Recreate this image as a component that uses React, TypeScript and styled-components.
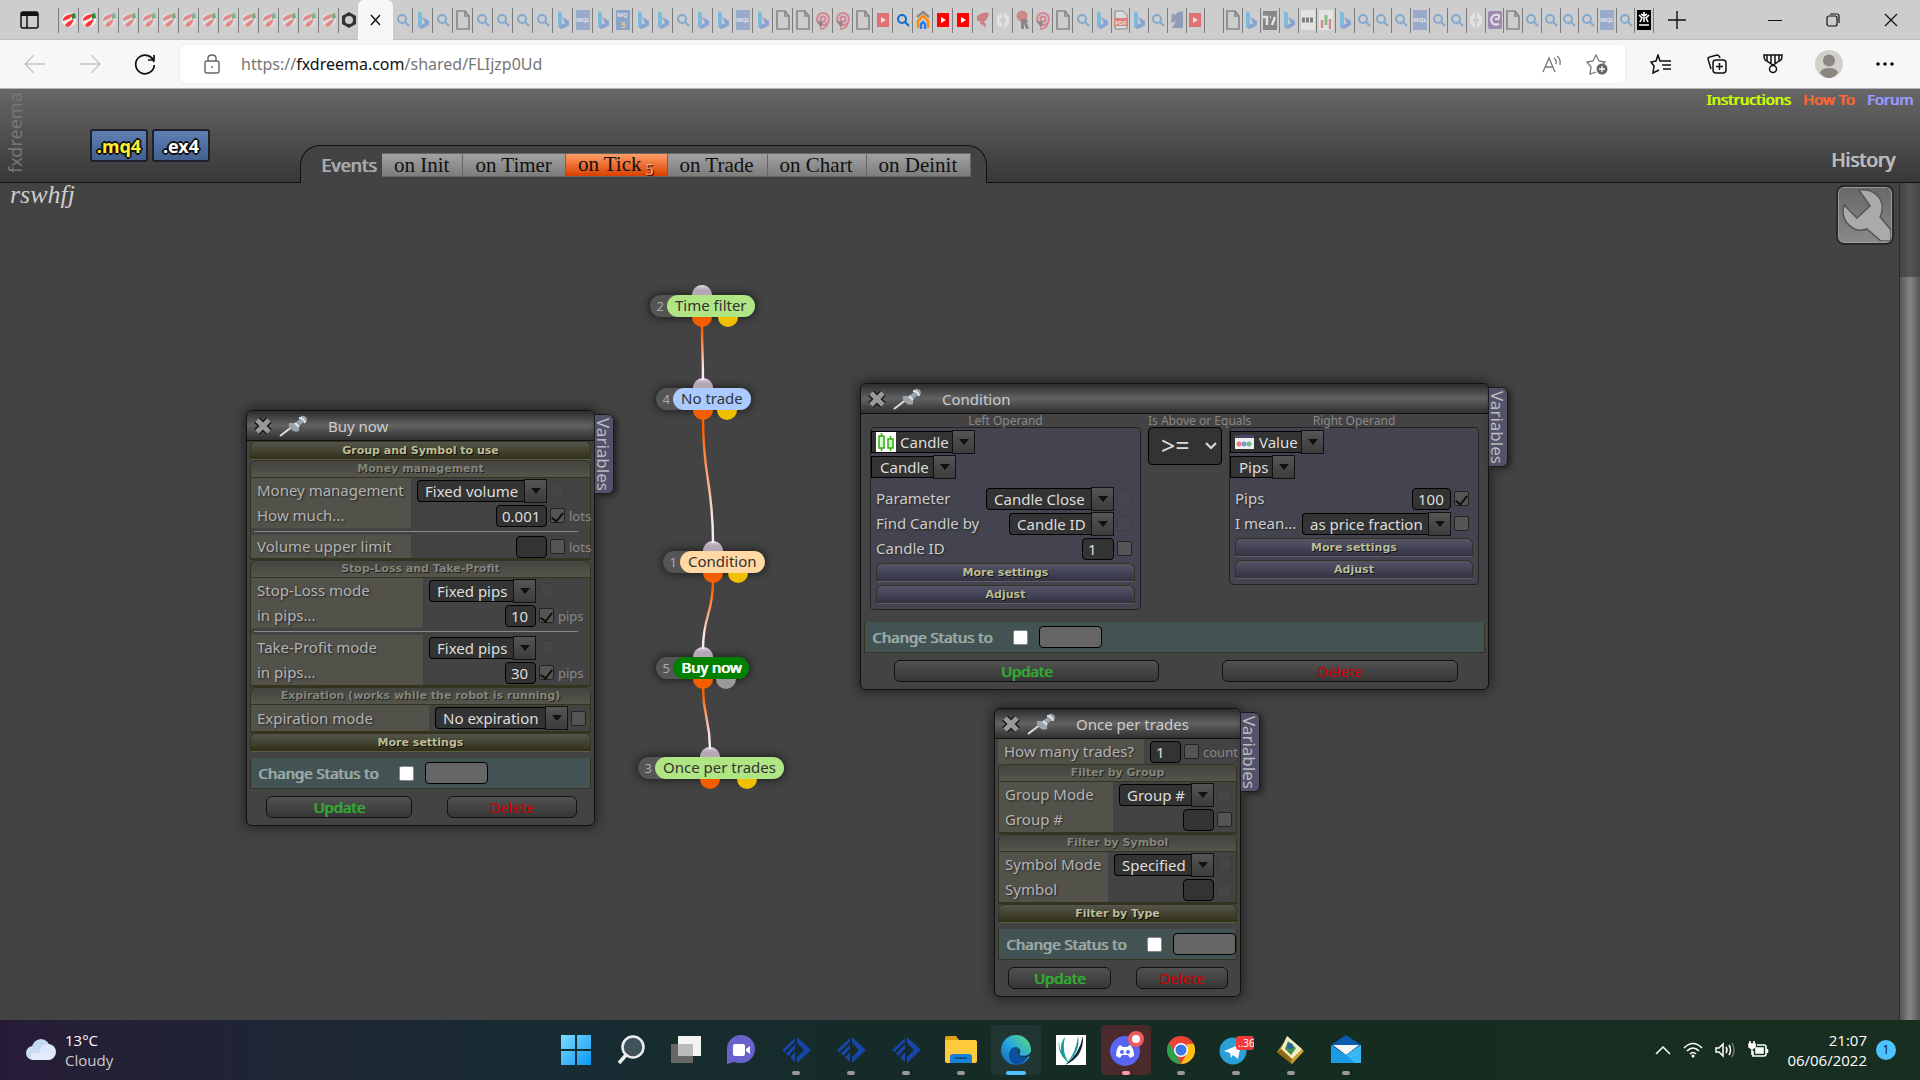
import React, { useId } from "react";
import styled, { createGlobalStyle, css } from "styled-components";

const UI = `"Noto Sans", "Open Sans", sans-serif`;
const CHROME = `"Open Sans", "Noto Sans", sans-serif`;
const HEAD = `"DejaVu Sans", Verdana, sans-serif`;
const SERIF = `"Liberation Serif", Georgia, serif`;

const Global = createGlobalStyle`
  * { box-sizing: border-box; }
  body { margin: 0; background: #434343; font-family: ${UI}; font-size: 15px; }
  button, input, select { font: inherit; color: inherit; margin: 0; }
  button { padding: 0; border: 0; background: none; cursor: pointer; }
  a { text-decoration: none; }
`;

const Page = styled.div`
  min-height: 100vh;
  display: flex;
  flex-direction: column;
  overflow: hidden;
`;

/* ---------- browser chrome ---------- */

const TabStrip = styled.div`
  display: flex;
  height: 40px;
  background: #cdcdcd;
  box-shadow: inset 0 -1px #bdbdbd;
`;
const TabMenu = styled.button`
  width: 58px;
  display: grid;
  place-items: center;
`;
const Tabs = styled.div<{ $width?: number }>`
  display: flex;
  align-items: center;
  ${(p) => p.$width && `flex: 0 0 ${p.$width}px;`}
`;
const TabItem = styled.button<{ $grow?: boolean; $side: "left" | "right"; $dim?: boolean }>`
  flex: ${(p) => (p.$grow ? "1 1 0" : "0 0 20px")};
  min-width: 0;
  height: 25px;
  display: grid;
  place-items: center;
  border-${(p) => p.$side}: 1px solid #7c7c7c;
  svg { opacity: ${(p) => (p.$dim ? 0.45 : 1)}; }
`;
const ActiveTab = styled.div`
  width: 35px;
  display: grid;
  place-items: center;
  background: #f7f7f7;
  border-radius: 6px 6px 0 0;
`;
const NewTab = styled.button`
  width: 46px;
  display: grid;
  place-items: center;
`;
const WindowButtons = styled.div`
  margin-left: auto;
  display: flex;
`;
const WindowButton = styled.button`
  width: 58px;
  display: grid;
  place-items: center;
`;
const Toolbar = styled.div`
  display: flex;
  align-items: center;
  height: 49px;
  background: #f7f7f7;
  border-bottom: 1px solid #b4b4b4;
  padding: 0 7px;
`;
const ToolButton = styled.button`
  width: 56px;
  height: 40px;
  display: grid;
  place-items: center;
`;
const NavGroup = styled.div`
  display: flex;
  width: 173px;
  button { width: 55px; }
`;
const UrlBar = styled.div`
  flex: 1;
  display: flex;
  align-items: center;
  height: 38px;
  background: #fff;
  border-radius: 5px;
  box-shadow: 0 0 2px #ddd;
  padding: 0 6px 0 23px;
  margin-right: 8px;
  gap: 20px;
`;
const UrlText = styled.div`
  flex: 1;
  font: 16px/24px ${UI};
  color: #767676;
  b { font-weight: 400; color: #111; }
`;
const UrlTools = styled.div`
  display: flex;
  button { width: 45px; }
`;

type Kind = "flag" | "hex" | "q" | "Q" | "b" | "doc" | "mql" | "mq5" | "sp" | "yt" | "YT" | "home" | "bird" | "dia" | "man" | "pdf" | "kn" | "none" | "tv" | "dots" | "bars" | "c" | "skull";

function Favicon({ kind }: { kind: Kind }) {
  const body: Record<Kind, React.ReactNode> = {
    flag: <g><circle cx="7" cy="10" r="7" fill="#eee" /><path d="M1 9Q4 4 12 4Q9 9 1 11Z" fill="#f33" /><path d="M3 15Q6 11 12 9Q10 16 5 17Z" fill="#f33" /><path d="M10 4L13 3L14 8L10 9Z" fill="#2b8a35" /></g>,
    hex: <path d="M7 2L14 6V14L7 18L0 14V6ZM7 6A4 4 0 1 0 7 14A4 4 0 1 0 7 6Z" fill="#333" fillRule="evenodd" />,
    q: <g fill="none" stroke="#2a7fd0" strokeWidth="2"><circle cx="6" cy="9" r="4" /><path d="M9 12L13 16" /></g>,
    Q: <g fill="none" stroke="#0b6ccb" strokeWidth="2"><circle cx="6" cy="9" r="4" /><path d="M9 12L13 16" /></g>,
    b: <g><path d="M2 1L6 3V15L2 17Z" fill="#1ba7ec" /><path d="M6 7L13 11V15L6 19L2 17L9 13Z" fill="#3d6fe0" /></g>,
    doc: <path d="M1 1H9L13 6V19H1ZM9 1V6H13" fill="none" stroke="#333" strokeWidth="1.6" />,
    mql: <g><rect width="14" height="20" fill="#5b84c8" /><text x="0" y="12" fontSize="6" fontWeight="700" fill="#fff" fontFamily="Open Sans">MQL</text></g>,
    mq5: <g><rect width="14" height="20" fill="#3b73c8" /><text x="1" y="7" fontSize="6" fontWeight="700" fill="#fff" fontFamily="Open Sans">MQ</text><text x="5" y="18" fontSize="8" fontWeight="700" fill="#fc3" fontFamily="Open Sans">5</text></g>,
    sp: <g fill="none" stroke="#e0304a" strokeWidth="2"><circle cx="7" cy="9" r="6" /><circle cx="7" cy="9" r="2.600" /><path d="M12 13Q10 19 4 19" /><path d="M1 11L7 12L5 18Z" fill="#333" stroke="none" /></g>,
    yt: <g><rect x="1" y="3" width="12" height="14" fill="#f00" /><path d="M5 7L10 10L5 13Z" fill="#fff" /></g>,
    YT: <g><rect x="1" y="3" width="12" height="14" fill="#f00" /><path d="M5 7L10 10L5 13Z" fill="#fff" /></g>,
    home: <g fill="none" strokeWidth="2.4"><path d="M1 7L7 2L13 7" stroke="#888" /><path d="M2 18V11L7 6L12 11V18" stroke="#f80" /><path d="M5 19V14L7 12L9 14V19" stroke="#27f" /></g>,
    bird: <path d="M1 6Q7 1 13 3Q12 9 8 12Q11 14 9 18Q7 14 4 14Q6 10 1 11Z" fill="#d02030" />,
    dia: <path d="M6 2L1 7V14L6 18V13L3 10L6 8ZM8 2L13 7V14L8 18V13L11 10L8 8Z" fill="#fff" />,
    man: <g><circle cx="6" cy="6" r="5.500" fill="#c33" /><path d="M5 9H10Q13 10 11 13L13 19H10L8 14V19H5Z" fill="#333" /></g>,
    pdf: <g><path d="M1 1H9L13 5V19H1Z" fill="#eee" stroke="#333" /><rect y="8" width="14" height="8" fill="#e22" /><text x="1" y="15" fontSize="6" fontWeight="700" fill="#fff" fontFamily="Open Sans">PDF</text></g>,
    kn: <path d="M2 3L5 5L8 2L13 1V18H2L6 11L1 13Z" fill="#46649c" />,
    none: null,
    tv: <g><rect y="1" width="14" height="19" fill="#333" /><path d="M0 7H4V15M9 15L12 7M7 7H8" stroke="#fff" strokeWidth="2.400" fill="none" /></g>,
    dots: <g><rect width="14" height="20" fill="#fff" /><path d="M1 10H13" stroke="#222" strokeWidth="5" strokeDasharray="3 1" /></g>,
    bars: <g><rect width="14" height="20" fill="#fff" /><path d="M3 10V18M11 9V19" stroke="#d33" strokeWidth="2.4" /><path d="M7 5V15" stroke="#3a3" strokeWidth="3" /></g>,
    c: <g><rect y="1" width="14" height="18" rx="2" fill="#6b3a90" /><path d="M11 5Q4 4 3 10Q4 16 11 14M11 5Q12 10 7 9" fill="none" stroke="#fff" strokeWidth="2" /></g>,
    skull: <g><rect width="14" height="20" fill="#000" /><path d="M7 2V12M2 5L5 8L3 12M12 5L9 8L11 12M2 15H12M4 4L7 6L10 4" stroke="#fff" strokeWidth="1.6" fill="none" /></g>,
  };
  return <svg width="14" height="20" viewBox="0 0 14 20">{body[kind]}</svg>;
}

const BRIGHT: Kind[] = ["Q", "YT", "home", "skull", "hex"];
const middleTabs = "q b q doc q q q q b mql b mq5 b b q b b mql b doc doc sp sp doc yt Q home YT YT bird dia man sp doc q".split(" ") as Kind[];
const narrowTabs = "b pdf b q kn yt none doc b tv b dots bars b q q q mql q q dia c doc q q q q mql q skull".split(" ") as Kind[];

function BrowserChrome() {
  return (
    <header>
      <TabStrip>
        <TabMenu aria-label="Tab actions">
          <svg width="19" height="18" fill="none" stroke="#111" strokeWidth="1.5"><rect x="1" y="1" width="17" height="16" rx="2" /><path d="M7 4V17" /><path d="M1 3H18" strokeWidth="4" /></svg>
        </TabMenu>
        <Tabs>
          {Array.from({ length: 14 }, (_, i) => (
            <TabItem key={i} $side="left" $dim={i > 1} aria-label={`Tab ${i + 1}`}><Favicon kind="flag" /></TabItem>
          ))}
          <TabItem $side="left" aria-label="Tab 15"><Favicon kind="hex" /></TabItem>
        </Tabs>
        <ActiveTab>
          <button aria-label="Close tab"><svg width="11" height="12" stroke="#111" strokeWidth="1.4"><path d="M1 1L10 11M10 1L1 11" /></svg></button>
        </ActiveTab>
        <Tabs>
          {middleTabs.map((k, i) => (
            <TabItem key={i} $side="right" $dim={!BRIGHT.includes(k)} aria-label={`Tab ${i + 17}`}><Favicon kind={k} /></TabItem>
          ))}
        </Tabs>
        <Tabs $width={561}>
          {narrowTabs.map((k, i) => (
            <TabItem key={i} $grow $side="right" $dim={!BRIGHT.includes(k)} aria-label={`Tab ${i + 52}`}><Favicon kind={k} /></TabItem>
          ))}
        </Tabs>
        <NewTab aria-label="New tab"><svg width="18" height="18" stroke="#111" strokeWidth="1.4"><path d="M9 0V18M0 9H18" /></svg></NewTab>
        <WindowButtons>
          <WindowButton aria-label="Minimize"><svg width="14" height="14" stroke="#111"><path d="M0 7.500H14" /></svg></WindowButton>
          <WindowButton aria-label="Restore"><svg width="14" height="14" fill="none" stroke="#111" strokeWidth="1.2"><rect x="1" y="3" width="10" height="10" rx="2" /><path d="M4 1H11Q13 1 13 3V10" /></svg></WindowButton>
          <WindowButton aria-label="Close"><svg width="14" height="14" stroke="#111" strokeWidth="1.2"><path d="M1 1L13 13M13 1L1 13" /></svg></WindowButton>
        </WindowButtons>
      </TabStrip>
      <Toolbar>
        <NavGroup>
          <ToolButton aria-label="Back"><svg width="22" height="20" fill="none" stroke="#c4c4c4" strokeWidth="1.4"><path d="M21 10H2M10 1L1 10L10 19" /></svg></ToolButton>
          <ToolButton aria-label="Forward"><svg width="22" height="20" fill="none" stroke="#c4c4c4" strokeWidth="1.4"><path d="M1 10H20M12 1L21 10L12 19" /></svg></ToolButton>
          <ToolButton aria-label="Refresh"><svg width="22" height="22" fill="none" stroke="#111" strokeWidth="1.7"><path d="M20 9A9.300 9.300 0 1 0 20.300 12M20 2V7H14" /></svg></ToolButton>
        </NavGroup>
        <UrlBar>
          <svg width="18" height="20" fill="none" stroke="#666" strokeWidth="1.4"><rect x="2" y="7" width="14" height="12" rx="2" /><path d="M5 7V4.500Q5 1 9 1Q13 1 13 4.500V7" /><circle cx="9" cy="13" r="1" fill="#666" stroke="none" /></svg>
          <UrlText>https://<b>fxdreema.com</b>/shared/FLIjzp0Ud</UrlText>
          <UrlTools>
            <ToolButton aria-label="Read aloud"><svg width="20" height="18" fill="none" stroke="#777" strokeWidth="1.3"><path d="M1 17L7 3L13 17M3 12H11M12 3Q15 5 14 9M15 1Q19 4 18 10" /></svg></ToolButton>
            <ToolButton aria-label="Add to favorites"><svg width="22" height="21" fill="none" stroke="#777" strokeWidth="1.3"><path d="M10 18L4 20L5 13L1 8L7 7L10 1L13 7L19 8L17 10" /><circle cx="16" cy="15" r="5.500" fill="#666" stroke="none" /><path d="M16 12V18M13 15H19" stroke="#fff" /></svg></ToolButton>
          </UrlTools>
        </UrlBar>
        <ToolButton aria-label="Favorites"><svg width="22" height="20" fill="none" stroke="#111" strokeWidth="1.5"><path d="M14 7L10 7L8 1L6 7L1 8L4 12L3 19L9 16M14 7H21M12 11H21M13 15H21" /></svg></ToolButton>
        <ToolButton aria-label="Collections"><svg width="22" height="20" fill="none" stroke="#111" strokeWidth="1.5"><path d="M5 15L2 5Q2 3 4 3L11 1Q13 1 14 4" /><rect x="7" y="6" width="13" height="13" rx="3" /><path d="M13.500 9V16M10 12.500H17" /></svg></ToolButton>
        <ToolButton aria-label="Rewards"><svg width="20" height="20" fill="none" stroke="#111" strokeWidth="1.5"><path d="M4 1H16V7L10 11L4 7ZM4 1H1Q1 7 4 7M16 1H19Q19 7 16 7M8 1V9M12 1V9" /><circle cx="10" cy="15" r="3.500" /></svg></ToolButton>
        <ToolButton aria-label="Profile"><svg width="28" height="28"><circle cx="14" cy="14" r="14" fill="#d3d0cc" /><circle cx="14" cy="10.500" r="6" fill="#8c8680" /><path d="M5 23Q6 18 14 18Q22 18 23 23Q19 28 14 28Q9 28 5 23" fill="#8c8680" /></svg></ToolButton>
        <ToolButton aria-label="Settings and more"><svg width="18" height="4" fill="#111"><circle cx="2" cy="2" r="1.800" /><circle cx="9" cy="2" r="1.800" /><circle cx="16" cy="2" r="1.800" /></svg></ToolButton>
      </Toolbar>
    </header>
  );
}

/* ---------- site header ---------- */

const faux = css`text-shadow: 1px 0 currentColor;`;

const SiteHeader = styled.div`
  display: flex;
  height: 94px;
  background: linear-gradient(#676767, #383838);
  border-bottom: 1px solid #111;
`;
const Brand = styled.div`
  width: 26px;
  writing-mode: vertical-rl;
  transform: rotate(180deg);
  padding-bottom: 3px;
  font-size: 18px;
  line-height: 30px;
  text-align: right;
  color: #777;
`;
const Downloads = styled.div`
  display: flex;
  gap: 4px;
  padding: 40px 0 0 64px;
  width: 274px;
`;
const FileButton = styled.button<{ $color: string }>`
  width: 58px;
  height: 33px;
  border: 2px solid #1c222c;
  border-radius: 3px;
  background: linear-gradient(#5f7fb4, #42608f);
  color: ${(p) => p.$color};
  font: 700 18px/24px ${UI};
  text-shadow: -2px 0 #111, 2px 0 #111, 0 -2px #111, 0 2px #111, -1px -1px #111, 1px 1px #111, 1px -1px #111, -1px 1px #111;
`;
const EventPanel = styled.div`
  display: flex;
  align-items: center;
  align-self: flex-end;
  height: 38px;
  margin-bottom: -1px;
  padding: 0 15px 0 20px;
  background: #434343;
  border: 1px solid #111;
  border-bottom: 0;
  border-radius: 20px 20px 0 0;
`;
const EventTitle = styled.div`
  width: 61px;
  font-size: 18px;
  line-height: 22px;
  color: #aaa;
  ${faux}
`;
const EventTab = styled.button<{ $active?: boolean }>`
  height: 24px;
  padding: 0 13px 0 12px;
  border: 1px solid #666;
  border-left-width: 0;
  background: ${(p) => (p.$active ? "linear-gradient(#ff9d66, #d84000)" : "linear-gradient(#a2a2a2, #7c7c7c)")};
  color: #111;
  font: 21px/20px ${SERIF};
  white-space: nowrap;
  sub { font-size: 16px; line-height: 10px; color: #ffb184; text-shadow: 1px 1px 1px #000; margin-left: 4px; vertical-align: -4px; }
`;
const HeaderSide = styled.div`
  margin-left: auto;
  display: flex;
  flex-direction: column;
  justify-content: space-between;
  align-items: flex-end;
  padding: 0 7px 8px 0;
`;
const Links = styled.nav`
  display: flex;
  gap: 12px;
  line-height: 20px;
`;
const NavLink = styled.a<{ $color: string }>`
  color: ${(p) => p.$color};
  ${faux}
`;
const History = styled.button`
  font-size: 19px;
  line-height: 28px;
  color: #bbb;
  margin-right: 18px;
  ${faux}
`;

function AppHeader() {
  return (
    <SiteHeader>
      <Brand>fxdreema</Brand>
      <Downloads>
        <FileButton $color="#fe3">.mq4</FileButton>
        <FileButton $color="#fff">.ex4</FileButton>
      </Downloads>
      <EventPanel>
        <EventTitle>Events</EventTitle>
        <EventTab>on Init</EventTab>
        <EventTab>on Timer</EventTab>
        <EventTab $active>on Tick<sub>5</sub></EventTab>
        <EventTab>on Trade</EventTab>
        <EventTab>on Chart</EventTab>
        <EventTab>on Deinit</EventTab>
      </EventPanel>
      <HeaderSide>
        <Links>
          <NavLink href="#instructions" $color="#cf0">Instructions</NavLink>
          <NavLink href="#howto" $color="#f63">How To</NavLink>
          <NavLink href="#forum" $color="#99f">Forum</NavLink>
        </Links>
        <History>History</History>
      </HeaderSide>
    </SiteHeader>
  );
}

/* ---------- canvas ---------- */

const Canvas = styled.main`
  position: relative;
  flex: 1;
  display: flex;
  justify-content: space-between;
  background: #434343;
`;
const ProjectName = styled.div`
  padding-left: 10px;
  font: italic 26px/24px ${SERIF};
  color: #ccc;
`;
const CanvasSide = styled.div`
  display: flex;
  gap: 5px;
`;
const WrenchButton = styled.button`
  width: 58px;
  height: 60px;
  margin-top: 2px;
  border: 2px solid #2a2a2a;
  border-radius: 8px;
  background: linear-gradient(#686868, #8a8a8a);
  box-shadow: inset 0 0 0 1px #999;
`;
const ScrollTrack = styled.div`
  width: 21px;
  border-left: 1px solid #2c2c2c;
  background: linear-gradient(90deg, #444, #555, #444);
  padding-top: 94px;
`;
const ScrollThumb = styled.div`
  height: 100%;
  background: linear-gradient(90deg, #555, #858585, #555);
`;
const Wires = styled.svg`
  position: absolute;
  left: 0;
  top: 0;
  pointer-events: none;
`;

const Node = styled.button<{ $x: number; $y: number }>`
  position: absolute;
  left: ${(p) => p.$x}px;
  top: ${(p) => p.$y}px;
  display: flex;
  height: 22px;
  border-radius: 11px;
  background: #555;
  box-shadow: 0 0 8px 1px #1c1c1c;
`;
const NodeId = styled.span`
  width: 17px;
  text-align: right;
  padding-right: 3px;
  font-size: 13px;
  line-height: 22px;
  color: #aaa;
`;
const NodeLabel = styled.span<{ $bg: string; $fg: string; $bold?: boolean }>`
  height: 22px;
  padding: 0 8px;
  border-radius: 11px;
  background: ${(p) => p.$bg};
  color: ${(p) => p.$fg};
  line-height: 20px;
  font-size: 15px;
  white-space: nowrap;
  ${(p) => p.$bold && faux}
`;

type Block = { id: number; x: number; y: number; label: string; bg: string; dot: number; alt: number; fg?: string; bold?: boolean; altColor?: string };
const blocks: Block[] = [
  { id: 2, x: 650, y: 112, label: "Time filter", bg: "#b0e583", dot: 702, alt: 728 },
  { id: 4, x: 656, y: 205, label: "No trade", bg: "#abcaff", dot: 703, alt: 727 },
  { id: 1, x: 663, y: 368, label: "Condition", bg: "#ffd8a4", dot: 713, alt: 738 },
  { id: 5, x: 656, y: 474, label: "Buy now", bg: "#008000", dot: 703, alt: 726, fg: "#fff", bold: true, altColor: "#999" },
  { id: 3, x: 638, y: 574, label: "Once per trades", bg: "#b0e583", dot: 710, alt: 747 },
];

function Dots() {
  return (
    <Wires width="820" height="640">
      <defs>
        <linearGradient id="inlet" x1="0" y1="0" x2="0" y2="1"><stop offset="0" stopColor="#f6e6f6" /><stop offset=".5" stopColor="#a496a4" /></linearGradient>
      </defs>
      {blocks.map((b) => (
        <g key={b.id}>
          <path d={`M${b.dot - 10} ${b.y}a10 10 0 0 1 20 0z`} fill="#cdbfcd" />
          <path d={`M${b.dot - 10} ${b.y}a10 10 0 0 1 20 0z`} fill="url(#inlet)" fillOpacity=".6" />
          <path d={`M${b.dot - 10} ${b.y + 22}a10 10 0 0 0 20 0z`} fill="#f55e00" />
          <path d={`M${b.alt - 10} ${b.y + 22}a10 10 0 0 0 20 0z`} fill={b.altColor ?? "#f0c000"} />
        </g>
      ))}
      <defs>
        {blocks.slice(1).map((b, i) => (
          <linearGradient key={i} id={`wire${i}`} gradientUnits="userSpaceOnUse" x1="0" x2="0" y1={blocks[i].y + 32} y2={b.y - 10}>
            <stop offset="0.1" stopColor="#ff6200" /><stop offset="0.85" stopColor="#fbe8f8" />
          </linearGradient>
        ))}
      </defs>
      {blocks.slice(1).map((b, i) => {
        const a = blocks[i], y1 = a.y + 30, y2 = b.y - 8, m = (y1 + y2) / 2;
        return <path key={i} d={`M${a.dot} ${y1}C${a.dot} ${m} ${b.dot} ${m} ${b.dot} ${y2}`} fill="none" stroke={`url(#wire${i})`} strokeWidth="2.4" />;
      })}
    </Wires>
  );
}

function Diagram() {
  return (
    <>
      {blocks.map((b) => (
        <Node key={b.id} $x={b.x} $y={b.y}>
          <NodeId>{b.id}</NodeId>
          <NodeLabel $bg={b.bg} $fg={b.fg ?? "#333"} $bold={b.bold}>{b.label}</NodeLabel>
        </Node>
      ))}
      <Dots />
    </>
  );
}

/* ---------- block windows ---------- */

const Win = styled.section<{ $x: number; $y: number; $w: number }>`
  position: absolute;
  left: ${(p) => p.$x}px;
  top: ${(p) => p.$y}px;
  width: ${(p) => p.$w}px;
  border: 1px solid #111;
  border-radius: 6px;
  background: #434343;
  box-shadow: 0 0 12px 2px #222;
  padding: 0 3px 7px;
`;
const TitleBar = styled.div`
  display: flex;
  align-items: center;
  height: 30px;
  margin: 0 -3px;
  padding-left: 6px;
  border-bottom: 1px solid #111;
  border-radius: 6px 6px 0 0;
  background: linear-gradient(#2c2c2c, #626262 50%, #303030);
  color: #ccc;
`;
const TitleIcons = styled.div`
  display: flex;
  align-items: center;
  gap: 6px;
  width: 75px;
  svg { display: block; }
`;
const VariablesTab = styled.button`
  position: absolute;
  left: 100%;
  top: 3px;
  width: 20px;
  height: 80px;
  writing-mode: vertical-rl;
  font-size: 17px;
  line-height: 19px;
  color: #bbb;
  background: #52526a;
  border: 1px solid #1c1c1c;
  border-radius: 0 6px 6px 0;
  box-shadow: 3px 2px 6px #222;
`;
const Fold = styled.button<{ $tone: "olive" | "violet" }>`
  display: block;
  width: 100%;
  height: 19px;
  border: 1px solid #333320;
  border-bottom-style: dotted;
  border-radius: 6px 6px 0 0;
  font: 700 11px/16px ${HEAD};
  color: #bdbd95;
  text-shadow: 1px 1px #111;
  ${(p) => p.$tone === "olive" && "background: linear-gradient(#55554b, #303018); border-bottom-color: #66664a;"}
  ${(p) => p.$tone === "violet" && "background: linear-gradient(#555568, #333344); border-bottom-color: #666;"}
`;
const GroupHead = styled.h3`
  height: 18px;
  margin: 0;
  border: 1px solid #333320;
  border-radius: 6px 6px 0 0;
  background: linear-gradient(#444440, #55554c);
  color: #85857a;
  font: 700 11px/16px ${HEAD};
  text-align: center;
  text-shadow: 1px 1px #222;
`;
const GroupBody = styled.div<{ $bare?: boolean }>`
  border: 1px solid #333320;
  border-width: ${(p) => (p.$bare ? "0" : "0 1px 2px")};
`;
const Line = styled.hr`
  margin: 3px 12px 3px 3px;
  border: 0;
  height: 1px;
  background: #888;
`;
const RowBox = styled.div<{ $label: number; $value: number; $h: number }>`
  display: grid;
  grid-template-columns: ${(p) => p.$label}px ${(p) => p.$value}px 15px auto;
  align-items: center;
  justify-content: start;
  height: ${(p) => p.$h}px;
`;
const RowLabel = styled.label<{ $plain?: boolean }>`
  align-self: stretch;
  display: flex;
  align-items: center;
  padding-left: ${(p) => (p.$plain ? 0 : 6)}px;
  line-height: 22px;
  padding-bottom: 1px;
  white-space: nowrap;
  color: ${(p) => (p.$plain ? "#ccc" : "#b4b4b4")};
  background: ${(p) => (p.$plain ? "none" : "#52524b")};
  text-shadow: 1px 1px 2px #222;
`;
const Value = styled.div`
  display: flex;
  justify-content: flex-end;
  align-items: center;
  padding-right: 3px;
`;
const Unit = styled.span`
  padding-left: 4px;
  font-size: 13px;
  color: #888;
`;
const Check = styled.input<{ $ghost?: boolean; $white?: boolean }>`
  appearance: none;
  display: grid;
  place-items: center;
  width: 15px;
  height: 15px;
  border: 1px solid ${(p) => (p.$white ? "#888" : "#222")};
  border-radius: 2px;
  background: ${(p) => (p.$white ? "#fff" : "#555")};
  opacity: ${(p) => (p.$ghost ? 0.12 : 1)};
  &:checked::after {
    content: "";
    width: 5px;
    height: 10px;
    border: solid #111;
    border-width: 0 2px 2px 0;
    transform: rotate(38deg);
  }
`;
const Field = styled.input<{ $w: number; $status?: boolean }>`
  width: ${(p) => p.$w}px;
  height: 22px;
  border: 1px solid #000;
  border-radius: 4px;
  padding: 0 5px;
  background: ${(p) => (p.$status ? "#666" : "#333")};
  color: #ddd;
`;
const Picker = styled.div<{ $w: number }>`
  display: flex;
  align-items: center;
  width: ${(p) => p.$w}px;
  height: 24px;
`;
const PickerFace = styled.div<{ $square?: boolean }>`
  flex: 1;
  min-width: 0;
  display: flex;
  align-items: center;
  height: 22px;
  border: 1px solid #000;
  border-right: 0;
  border-radius: ${(p) => (p.$square ? "0" : "4px 0 0 4px")};
  background: #333;
  padding-left: ${(p) => (p.$square ? 4 : 3)}px;
`;
const PickerSelect = styled.select`
  appearance: none;
  flex: 1;
  min-width: 0;
  height: 20px;
  padding: 0 0 0 4px;
  border: 0;
  background: transparent;
  color: #ddd;
  line-height: 20px;
`;
const Arrow = styled.span`
  display: grid;
  place-items: center;
  width: 23px;
  height: 24px;
  border: 1px solid #111;
  background: linear-gradient(#555, #3c3c3c);
`;

function Select({ id, text, w, square, icon, label }: { id?: string; text: string; w: number; square?: boolean; icon?: React.ReactNode; label?: string }) {
  return (
    <Picker $w={w}>
      <PickerFace $square={square}>
        {icon}
        <PickerSelect id={id} aria-label={label}><option>{text}</option></PickerSelect>
      </PickerFace>
      <Arrow><svg width="10" height="6"><path d="M0 0H10L5 6Z" fill="#111" /></svg></Arrow>
    </Picker>
  );
}

type RowProps = { label: string; lw: number; vw: number; select?: string; w: number; value?: string; unit?: string; check?: "on" | "off" | "ghost"; plain?: boolean; h?: number };
function Row({ label, lw, vw, select, w, value, unit, check = "ghost", plain, h = 25 }: RowProps) {
  const id = useId();
  return (
    <RowBox $label={lw} $value={vw} $h={h}>
      <RowLabel htmlFor={id} $plain={plain}>{label}</RowLabel>
      <Value>{select ? <Select id={id} text={select} w={w} /> : <Field id={id} $w={w} defaultValue={value} />}</Value>
      <Check type="checkbox" aria-label={`${label} adjustable`} defaultChecked={check === "on"} $ghost={check === "ghost"} disabled={check === "ghost"} />
      {unit && <Unit>{unit}</Unit>}
    </RowBox>
  );
}

const Status = styled.div`
  display: flex;
  align-items: center;
  height: 31px;
  margin: 6px 0 7px;
  padding-left: 7px;
  border: 1px solid #333320;
  border-top: 0;
  background: #435252;
  color: #9aaba8;
`;
const StatusLabel = styled.label`
  width: 141px;
  ${faux}
`;
const StatusField = styled(Field)`
  margin-left: 11px;
`;
const Actions = styled.div<{ $cols: string; $left: number }>`
  display: grid;
  grid-template-columns: ${(p) => p.$cols};
  justify-content: start;
  padding-left: ${(p) => p.$left}px;
`;
const Action = styled.button<{ $color: string; $bold?: boolean }>`
  height: 22px;
  border: 1px solid #111;
  border-radius: 6px;
  background: linear-gradient(#525252, #363636);
  color: ${(p) => p.$color};
  line-height: 18px;
  ${(p) => p.$bold && faux}
`;

type BlockWindowProps = { title: string; x: number; y: number; w: number; cols: string; left: number; children: React.ReactNode };
function BlockWindow({ title, x, y, w, cols, left, children }: BlockWindowProps) {
  const id = useId();
  return (
    <Win $x={x} $y={y} $w={w}>
      <TitleBar>
        <TitleIcons>
          <button aria-label="Close window"><svg width="20" height="20"><path d="M4 4L16 16M16 4L4 16" stroke="#181818" strokeWidth="8" /><path d="M4 4L16 16M16 4L4 16" stroke="#999" strokeWidth="5" /></svg></button>
          <button aria-label="Pin window">
            <svg width="29" height="22"><path d="M1 21L14 11" stroke="#ddd" strokeWidth="2" /><path d="M10 8Q9 11 12 14Q15 18 20 16L20 11L25 7Q28 8 28 4Q26 0 22 1L21 4L16 8Z" fill="#9aa3aa" /><path d="M20 3Q25 3 26 8M16 8L20 12" stroke="#dfe6ea" strokeWidth="2" fill="none" /></svg>
          </button>
        </TitleIcons>
        {title}
      </TitleBar>
      {children}
      <Status>
        <StatusLabel htmlFor={id}>Change Status to</StatusLabel>
        <Check type="checkbox" id={id} $white />
        <StatusField $w={63} $status aria-label="New status" />
      </Status>
      <Actions $cols={cols} $left={left}>
        <Action $color="#3a3" $bold>Update</Action>
        <span />
        <Action $color="#c00">Delete</Action>
      </Actions>
      <VariablesTab>Variables</VariablesTab>
    </Win>
  );
}

const Operands = styled.div`
  display: flex;
  align-items: flex-start;
  gap: 7px;
  padding: 0 6px;
  height: 202px;
`;
const Operand = styled.div<{ $w: number }>`
  width: ${(p) => p.$w}px;
`;
const OperandTitle = styled.div`
  height: 13px;
  text-align: center;
  font-size: 12px;
  line-height: 14px;
  white-space: nowrap;
  color: #888;
`;
const OperandBox = styled.div`
  border: 1px solid #222;
  border-radius: 4px;
  background: #444450;
  padding: 2px 0 5px;
`;
const Sources = styled.div`
  display: grid;
  gap: 1px;
`;
const OperandRows = styled.div`
  padding: 7px 5px 0;
`;
const Folds = styled.div`
  display: grid;
  gap: 3px;
  padding-top: 2px;
`;
const Compare = styled.div`
  display: flex;
  align-items: center;
  height: 38px;
  padding: 0 4px 0 12px;
  border: 1px solid #000;
  border-radius: 4px;
  background: #333;
  color: #ddd;
  select { appearance: none; flex: 1; min-width: 0; height: 34px; border: 0; background: none; font-size: 25px; line-height: 30px; padding: 0 0 2px; }
`;

const CandleIcon = (
  <svg width="20" height="20"><rect width="20" height="20" fill="#fff" /><g fill="#cfc" stroke="#3a1" strokeWidth="1.500"><path d="M5.500 1V19M14.500 4V19" /><rect x="3" y="4" width="5" height="12" /><rect x="12" y="7" width="5" height="9" /></g></svg>
);
const ValueIcon = (
  <svg width="20" height="20"><rect x="0" y="3" width="19" height="14" fill="#eee" /><rect x="0" y="3" width="19" height="3" fill="#446" /><circle cx="4" cy="12" r="2.500" fill="#e77" /><circle cx="9" cy="12" r="2.500" fill="#79c" /><circle cx="14" cy="12" r="2.500" fill="#7b8" /></svg>
);

function BuyNow() {
  return (
    <BlockWindow title="Buy now" x={246} y={227} w={349} cols="146px 35px 130px" left={16}>
      <Fold $tone="olive">Group and Symbol to use</Fold>
      <GroupHead>Money management</GroupHead>
      <GroupBody>
        <Row label="Money management" lw={160} vw={139} select="Fixed volume" w={130} />
        <Row label="How much..." lw={160} vw={139} value="0.001" w={51} check="on" unit="lots" />
        <Line />
        <Row label="Volume upper limit" lw={160} vw={139} value="" w={31} check="off" unit="lots" h={23} />
      </GroupBody>
      <GroupHead>Stop-Loss and Take-Profit</GroupHead>
      <GroupBody>
        <Row label="Stop-Loss mode" lw={172} vw={116} select="Fixed pips" w={107} />
        <Row label="in pips..." lw={172} vw={116} value="10" w={31} check="on" unit="pips" />
        <Line />
        <Row label="Take-Profit mode" lw={172} vw={116} select="Fixed pips" w={107} />
        <Row label="in pips..." lw={172} vw={116} value="30" w={31} check="on" unit="pips" />
      </GroupBody>
      <GroupHead>Expiration (works while the robot is running)</GroupHead>
      <GroupBody>
        <Row label="Expiration mode" lw={178} vw={142} select="No expiration" w={133} check="off" h={26} />
      </GroupBody>
      <Fold $tone="olive">More settings</Fold>
    </BlockWindow>
  );
}

function Condition() {
  return (
    <BlockWindow title="Condition" x={860} y={200} w={629} cols="265px 63px 236px" left={30}>
      <Operands>
        <Operand $w={271}>
          <OperandTitle>Left Operand</OperandTitle>
          <OperandBox>
            <Sources>
              <Select label="Left operand source" text="Candle" w={104} square icon={CandleIcon} />
              <Select label="Left operand type" text="Candle" w={85} square />
            </Sources>
            <OperandRows>
              <Row plain label="Parameter" lw={110} vw={131} select="Candle Close" w={128} />
              <Row plain label="Find Candle by" lw={110} vw={131} select="Candle ID" w={105} />
              <Row plain label="Candle ID" lw={110} vw={131} value="1" w={32} check="off" />
              <Folds>
                <Fold $tone="violet">More settings</Fold>
                <Fold $tone="violet">Adjust</Fold>
              </Folds>
            </OperandRows>
          </OperandBox>
        </Operand>
        <Operand $w={74}>
          <OperandTitle>Is Above or Equals</OperandTitle>
          <Compare>
            <select aria-label="Comparison"><option>&gt;=</option></select>
            <svg width="12" height="8" fill="none" stroke="#ddd" strokeWidth="2"><path d="M1 1L6 6L11 1" /></svg>
          </Compare>
        </Operand>
        <Operand $w={250}>
          <OperandTitle>Right Operand</OperandTitle>
          <OperandBox>
            <Sources>
              <Select label="Right operand source" text="Value" w={94} square icon={ValueIcon} />
              <Select label="Right operand type" text="Pips" w={65} square />
            </Sources>
            <OperandRows>
              <Row plain label="Pips" lw={60} vw={159} value="100" w={39} check="on" />
              <Row plain label="I mean..." lw={60} vw={159} select="as price fraction" w={149} check="off" />
              <Folds>
                <Fold $tone="violet">More settings</Fold>
                <Fold $tone="violet">Adjust</Fold>
              </Folds>
            </OperandRows>
          </OperandBox>
        </Operand>
      </Operands>
    </BlockWindow>
  );
}

function OncePerTrades() {
  return (
    <BlockWindow title="Once per trades" x={994} y={525} w={247} cols="103px 25px 92px" left={10}>
      <GroupBody $bare>
        <Row label="How many trades?" lw={146} vw={40} value="1" w={31} check="off" unit="count" />
      </GroupBody>
      <GroupHead>Filter by Group</GroupHead>
      <GroupBody>
        <Row label="Group Mode" lw={114} vw={104} select="Group #" w={95} />
        <Row label="Group #" lw={114} vw={104} value="" w={31} check="off" />
      </GroupBody>
      <GroupHead>Filter by Symbol</GroupHead>
      <GroupBody>
        <Row label="Symbol Mode" lw={109} vw={109} select="Specified" w={100} />
        <Row label="Symbol" lw={109} vw={109} value="" w={31} />
      </GroupBody>
      <Fold $tone="olive">Filter by Type</Fold>
    </BlockWindow>
  );
}

/* ---------- taskbar ---------- */

const Taskbar = styled.footer`
  display: grid;
  grid-template-columns: 1fr auto 1fr;
  align-items: center;
  height: 60px;
  color: #fff;
  font: 14px/20px ${CHROME};
  background: linear-gradient(90deg, #271c38, #1e2634 15%, #172c33 30%, #162b28 45%, #152c22 65%, #182e20);
`;
const Weather = styled.button`
  display: flex;
  align-items: center;
  gap: 8px;
  padding-left: 25px;
  text-align: left;
  font: 15px/20px ${CHROME};
  span { color: #ccc; }
`;
const Apps = styled.div`
  display: flex;
  gap: 5px;
  padding-left: 2px;
`;
const AppButton = styled.button<{ $bg?: string; $mark?: string; $wide?: boolean }>`
  width: 50px;
  height: 50px;
  padding-top: 4px;
  display: grid;
  grid-template-rows: 42px 4px;
  place-items: center;
  border-radius: 5px;
  background: ${(p) => p.$bg ?? "none"};
  &::after {
    content: "";
    width: ${(p) => (p.$wide ? 20 : 8)}px;
    height: 4px;
    border-radius: 2px;
    background: ${(p) => p.$mark ?? "transparent"};
  }
`;
const Tray = styled.div`
  display: flex;
  align-items: center;
  justify-content: flex-end;
  gap: 12px;
  padding-right: 24px;
`;
const Clock = styled.div`
  text-align: right;
  font-size: 15px;
  margin: 0 -3px 0 6px;
`;
const Badge = styled.span`
  width: 20px;
  height: 20px;
  border-radius: 50%;
  background: #4cc2ff;
  color: #111;
  font-size: 12px;
  text-align: center;
`;

const Mt = <svg width="30" height="30"><g fill="#1746a8"><path d="M14 3V27L1 15Z" /><path d="M16 2L30 15L16 28V22L23 15L16 8Z" /></g><path d="M4 18L14 8M8 22L14 15" stroke="#15292a" strokeWidth="2" /></svg>;
const apps: { name: string; icon: React.ReactNode; bg?: string; mark?: string; wide?: boolean }[] = [
  { name: "Start", icon: <svg width="30" height="30"><defs><linearGradient id="win" x1="0" y1="0" x2="1" y2="1"><stop offset="0" stopColor="#7fdcff" /><stop offset="1" stopColor="#0a97f5" /></linearGradient></defs><path d="M0 0H14V14H0ZM16 0H30V14H16ZM0 16H14V30H0ZM16 16H30V30H16Z" fill="url(#win)" /></svg> },
  { name: "Search", icon: <svg width="28" height="30"><circle cx="16" cy="12" r="10.500" fill="#41535a" stroke="#eee" strokeWidth="2.500" /><path d="M9 20L2 28" stroke="#eee" strokeWidth="3.500" /></svg> },
  { name: "Task view", icon: <svg width="30" height="30"><rect x="0" y="9" width="22" height="19" fill="#666" /><rect x="7" y="1" width="23" height="20" fill="#f4f4f4" /><path d="M7 9H22V21H7Z" fill="#bbb" /></svg> },
  { name: "Chat", icon: <svg width="30" height="30"><path d="M1 29V14A14 14 0 1 1 15 28Q10 28 8 27Z" fill="#6a62cc" /><rect x="7" y="9" width="12" height="12" rx="2" fill="#fff" /><path d="M20 14L24 11V19L20 16Z" fill="#fff" /></svg> },
  { name: "MetaTrader 1", icon: Mt, mark: "#999" },
  { name: "MetaTrader 2", icon: Mt, mark: "#999" },
  { name: "MetaTrader 3", icon: Mt, mark: "#999" },
  { name: "Explorer", icon: <svg width="32" height="28"><path d="M0 2Q0 0 2 0H11L14 4V10H0Z" fill="#e0a010" /><rect y="4" width="32" height="23" rx="2" fill="#ffcb3d" /><path d="M5 27V21Q5 18 8 18H24Q27 18 27 21V27Z" fill="#1a7fd6" /><path d="M10 22H22" stroke="#0b5394" strokeWidth="2" /></svg>, mark: "#999" },
  { name: "Edge", icon: <svg width="30" height="30"><defs><linearGradient id="edge" x1="0" y1="1" x2="1" y2="0"><stop offset="0" stopColor="#0c62b8" /><stop offset=".5" stopColor="#2aa8e0" /><stop offset="1" stopColor="#5fe06a" /></linearGradient></defs><circle cx="15" cy="15" r="15" fill="url(#edge)" /><path d="M17 19Q20 22 28 20Q24 29 15 30Q7 27 8 18Q10 11 16 12Q19 14 17 19" fill="#0b4f9e" /><path d="M17 13Q21 15 18 20Q24 24 30 17L30 21L26 22Q19 23 17 19Z" fill="#1d3836" /></svg>, bg: "#213633", mark: "#4cc2ff", wide: true },
  { name: "Charts", icon: <svg width="30" height="30"><rect width="30" height="30" fill="#fff" /><path d="M3 6Q1 19 13 28Q5 17 9 2Q4 8 5 16Q3 12 3 6Z" fill="#1b9a9a" /><path d="M27 1Q28 22 9 30Q23 20 27 1Z" fill="#123" /><path d="M10 29Q20 18 22 1Q25 17 10 29Z" fill="#1b9a9a" /></svg> },
  { name: "Discord", icon: <svg width="36" height="40"><circle cx="17" cy="21" r="15" fill="#5865f2" /><path d="M8 26Q8 18 12 15L15 17H19L22 15Q26 18 26 26L22 28L20 25H14L12 28Z" fill="#fff" /><circle cx="14" cy="22" r="2" fill="#5865f2" /><circle cx="20" cy="22" r="2" fill="#5865f2" /><circle cx="28" cy="9" r="8" fill="#ee5a5f" /><circle cx="28" cy="9" r="4" fill="#fff" /></svg>, bg: "#4a2a2c", mark: "#ff99a4" },
  { name: "Chrome", icon: <svg width="28" height="28"><circle cx="14" cy="14" r="14" fill="#ea4335" /><path d="M2 7L9 19L14 28A14 14 0 0 1 2 7" fill="#2aa24c" /><path d="M14 28L20 17L20 8H26.700A14 14 0 0 1 14 28" fill="#fbc116" /><circle cx="14" cy="14" r="7" fill="#fff" /><circle cx="14" cy="14" r="5.500" fill="#3b78e7" /></svg>, mark: "#999" },
  { name: "Telegram", icon: <svg width="36" height="32"><circle cx="15" cy="17" r="13.500" fill="#2a9fd8" /><path d="M6 17L23 10L20 25L15 21L13 24L12 19Z" fill="#fff" /><rect x="18" y="2" width="18" height="14" rx="3" fill="#ef3b3b" /><text x="20" y="13" fontSize="10" fill="#fff" fontFamily="Open Sans">..36</text></svg>, mark: "#999" },
  { name: "Notes", icon: <svg width="30" height="30"><path d="M12 2L28 16L16 29L1 17Z" fill="#caa12b" /><path d="M11 1L26 14L16 24L5 14Z" fill="#f3eccb" /><path d="M1 17L5 14L16 24L15 28Z" fill="#8f6a12" /><path d="M12 6L20 13L15 20L9 14Z" fill="#3e8e52" /><circle cx="14" cy="11" r="3" fill="#25659a" /></svg>, mark: "#999" },
  { name: "Mail", icon: <svg width="30" height="30"><path d="M0 10L15 0L30 10V14H0Z" fill="#0b5cad" /><path d="M2 10H28L15 20Z" fill="#f5f5f5" /><path d="M0 10L15 20L30 10V28H0Z" fill="#1c9be6" /><path d="M15 20L30 10V28H24Z" fill="#35b8f5" /></svg>, mark: "#999" },
];

function TaskbarView() {
  return (
    <Taskbar>
      <Weather>
        <svg width="32" height="22"><circle cx="16" cy="9" r="9" fill="#c4d8f6" /><circle cx="8" cy="14" r="7" fill="#cbdcf5" /><circle cx="23" cy="13" r="8" fill="#dce8fa" /><rect x="6" y="14" width="20" height="7" rx="3" fill="#e3ecfa" /></svg>
        <div>13°C<br /><span>Cloudy</span></div>
      </Weather>
      <Apps>
        {apps.map((a) => (
          <AppButton key={a.name} aria-label={a.name} $bg={a.bg} $mark={a.mark} $wide={a.wide}>{a.icon}</AppButton>
        ))}
      </Apps>
      <Tray>
        <svg width="16" height="9" fill="none" stroke="#fff" strokeWidth="1.500"><path d="M1 8L8 1L15 8" /></svg>
        <svg width="20" height="16" fill="none" stroke="#fff" strokeWidth="1.600"><path d="M1 6Q10 -3 19 6M4 9Q10 3 16 9M7 12Q10 9 13 12" /><circle cx="10" cy="14" r="1.500" fill="#fff" stroke="none" /></svg>
        <svg width="20" height="16" fill="none" stroke="#fff" strokeWidth="1.500"><path d="M1 6H4L8 2V14L4 10H1ZM11 5Q13 8 11 11M14 3Q17 8 14 13" /><path d="M17 1Q21 8 17 15" stroke="#777" /></svg>
        <svg width="22" height="18" fill="none" stroke="#fff" strokeWidth="1.600"><path d="M10 4H17Q19 4 19 6V13Q19 15 17 15H6V10" /><path d="M20 8V12" strokeWidth="2.500" /><path d="M9 7H16V12H9Z" fill="#fff" /><path d="M2 3H8V6Q5 9 2 6ZM3 0V3M7 0V3M5 8V14" fill="#fff" /></svg>
        <Clock>21:07<br />06/06/2022</Clock>
        <Badge>1</Badge>
      </Tray>
    </Taskbar>
  );
}

export default function App() {
  return (
    <Page>
      <Global />
      <BrowserChrome />
      <AppHeader />
      <Canvas>
        <ProjectName>rswhfj</ProjectName>
        <CanvasSide>
          <WrenchButton aria-label="Project options">
            <svg width="52" height="54"><path d="M20 3Q36 1 42 14Q45 22 41 30L52 43V54H42L28 42Q16 46 8 36Q2 28 5 18L18 31L31 19Z" fill="#aaa" stroke="#555" strokeWidth="1.500" /></svg>
          </WrenchButton>
          <ScrollTrack><ScrollThumb /></ScrollTrack>
        </CanvasSide>
        <Diagram />
        <BuyNow />
        <Condition />
        <OncePerTrades />
      </Canvas>
      <TaskbarView />
    </Page>
  );
}
